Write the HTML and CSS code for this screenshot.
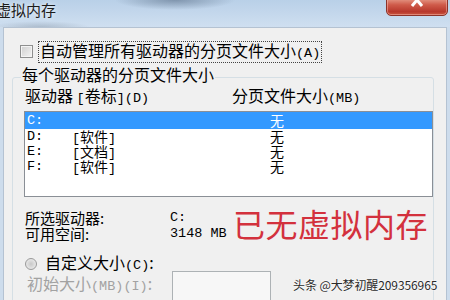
FILE: index.html
```html
<!DOCTYPE html>
<html lang="zh-CN">
<head>
<meta charset="utf-8">
<title>虚拟内存</title>
<link rel="stylesheet" href="styles.css">
</head>
<body>
<div class="window">
  <div class="titlebar">
    <div class="title">虚拟内存</div>
    <div class="close">
      <svg class="close-x" width="14" height="12" viewBox="0 0 14 12"><path d="M2 -4 L12 8 M12 -4 L2 8" stroke="#fff" stroke-width="3" fill="none"/></svg>
    </div>
  </div>
  <div class="client">
    <div class="check-row">
      <span class="checkbox"></span>
      <span class="focus-label">自动管理所有驱动器的分页文件大小<span class="mono">(A)</span></span>
    </div>
    <div class="group">
      <div class="legend">每个驱动器的分页文件大小</div>
      <div class="list-head">
        <span>驱动器 <span class="mono">[</span>卷标<span class="mono">](D)</span></span>
        <span>分页文件大小<span class="mono">(MB)</span></span>
      </div>
      <div class="listbox">
        <div class="row selected"><span class="mono">C:</span><span></span><span>无</span></div>
        <div class="row"><span class="mono">D:</span><span><span class="mono">[</span>软件<span class="mono">]</span></span><span>无</span></div>
        <div class="row"><span class="mono">E:</span><span><span class="mono">[</span>文档<span class="mono">]</span></span><span>无</span></div>
        <div class="row"><span class="mono">F:</span><span><span class="mono">[</span>软件<span class="mono">]</span></span><span>无</span></div>
      </div>
      <div class="info">
        <div class="info-grid">
          <span>所选驱动器:</span><span class="mono">C:</span>
          <span>可用空间:</span><span class="mono">3148 MB</span>
        </div>
        <div class="notice">已无虚拟内存</div>
      </div>
      <div class="radio-row">
        <span class="radio"></span>
        <span>自定义大小<span class="mono">(C)</span>:</span>
      </div>
      <div class="size-row">
        <span class="disabled-label">初始大小<span class="mono">(MB)(I)</span>:</span>
        <span class="textbox"></span>
      </div>
    </div>
    <div class="watermark">头条 @大梦初醒209356965</div>
  </div>
</div>
</body>
</html>
```
FILE: styles.css
```css
html, body {
  margin: 0;
  padding: 0;
}
body {
  width: 450px;
  height: 300px;
  overflow: hidden;
  font-family: "Noto Sans CJK SC", "Liberation Sans", sans-serif;
  color: #000;
}
.window {
  width: 450px;
  height: 300px;
  background: #cddcec;
  position: relative;
}
.titlebar {
  height: 27px;
  display: flex;
  justify-content: space-between;
  align-items: flex-start;
  background:
    radial-gradient(ellipse 60px 10px at 175px 0px, rgba(80,100,125,0.55), rgba(80,100,125,0) 100%),
    radial-gradient(ellipse 50px 6px at 40px 27px, rgba(110,125,140,0.35), rgba(110,125,140,0) 100%),
    linear-gradient(#b9d0e8, #cfdff0);
}
.title {
  margin-left: -4px;
  margin-top: 1px;
  font-size: 15px;
  line-height: 18px;
  color: #1b1b1b;
  text-shadow: 0 0 4px rgba(255,255,255,0.9);
}
.close {
  width: 60px;
  height: 17px;
  margin-top: -3px;
  margin-right: 2px;
  border: 1px solid #8c3329;
  border-radius: 0 0 5px 5px;
  background: linear-gradient(#e8a08e, #cf5b4a 40%, #b8382c 80%, #c9563f);
  box-shadow: inset 0 0 0 1px rgba(255,200,190,0.45);
  display: flex;
  justify-content: center;
  align-items: flex-start;
}
.close-x {
  display: block;
}
.client {
  margin: 0 3px;
  height: 273px;
  box-sizing: border-box;
  background: #f0f0f0;
  border: 1px solid #b4c2d2;
  border-bottom: none;
  overflow: hidden;
  position: relative;
}
.mono {
  font-family: "Liberation Mono", monospace;
  font-size: 13.5px;
}
.check-row {
  display: flex;
  align-items: center;
  height: 17px;
  margin-top: 15px;
  padding-left: 16px;
  font-size: 16px;
  line-height: 17px;
}
.checkbox {
  width: 11px;
  height: 11px;
  border: 1px solid #8e8f8f;
  background: linear-gradient(135deg, #cfcfcf, #f4f4f4);
  box-shadow: inset 0 0 0 1px #f4f4f4;
  margin-right: 5px;
  flex: none;
}
.focus-label {
  border: 1px dotted #444;
  padding: 0 1px;
  line-height: 16px;
}
.group {
  margin: 17px 12px 0 8px;
  height: 260px;
  border: 1px solid #d5dfe5;
  border-radius: 3px;
  font-size: 16px;
}
.legend {
  width: fit-content;
  margin: -12px 0 0 8px;
  padding: 0 1px;
  background: #f0f0f0;
  line-height: 16px;
}
.list-head {
  display: grid;
  grid-template-columns: 207px 1fr;
  margin-top: 5px;
  padding-left: 12px;
  line-height: 16px;
}
.listbox {
  margin: 4px 0 0 11px;
  height: 86px;
  box-sizing: border-box;
  border: 1px solid #8a8f96;
  background: #fff;
  font-size: 14px;
}
.row {
  display: grid;
  grid-template-columns: 45px 198px 1fr;
  padding-left: 2px;
  line-height: 15px;
  height: 15px;
}
.row.selected {
  background: #3399ff;
  color: #fff;
  height: 17px;
  line-height: 17px;
}
.info {
  display: flex;
  align-items: flex-start;
  margin-top: 13px;
  padding-left: 12px;
}
.info-grid {
  display: grid;
  grid-template-columns: 145px 63px;
  font-size: 15px;
  line-height: 16px;
}
.notice {
  margin-top: -5px;
  font-size: 32px;
  line-height: 36px;
  color: #d3313d;
  letter-spacing: 0.5px;
}
.radio-row {
  display: flex;
  align-items: center;
  margin-top: 11px;
  padding-left: 12px;
  line-height: 18px;
}
.radio {
  width: 10px;
  height: 10px;
  border-radius: 50%;
  border: 1px solid #9a9a9a;
  background: radial-gradient(circle at 50% 50%, #c8c8c8 0, #dedede 50%, #f2f2f2 100%);
  margin-right: 8px;
  flex: none;
}
.size-row {
  display: flex;
  align-items: flex-start;
  margin-top: -4px;
  padding-left: 14px;
}
.disabled-label {
  width: 145px;
  margin-top: 3px;
  line-height: 18px;
  color: #a2a2a2;
}
.textbox {
  width: 97px;
  height: 30px;
  border: 1px solid #adb2b5;
  background: #f7f7f7;
}
.watermark {
  position: absolute;
  left: 289px;
  top: 249px;
  font-size: 12px;
  line-height: 16px;
  letter-spacing: -0.1px;
  color: #2a2a2a;
  text-shadow: 0 0 2px #fff, 0 0 1px #fff;
  white-space: nowrap;
}
```
